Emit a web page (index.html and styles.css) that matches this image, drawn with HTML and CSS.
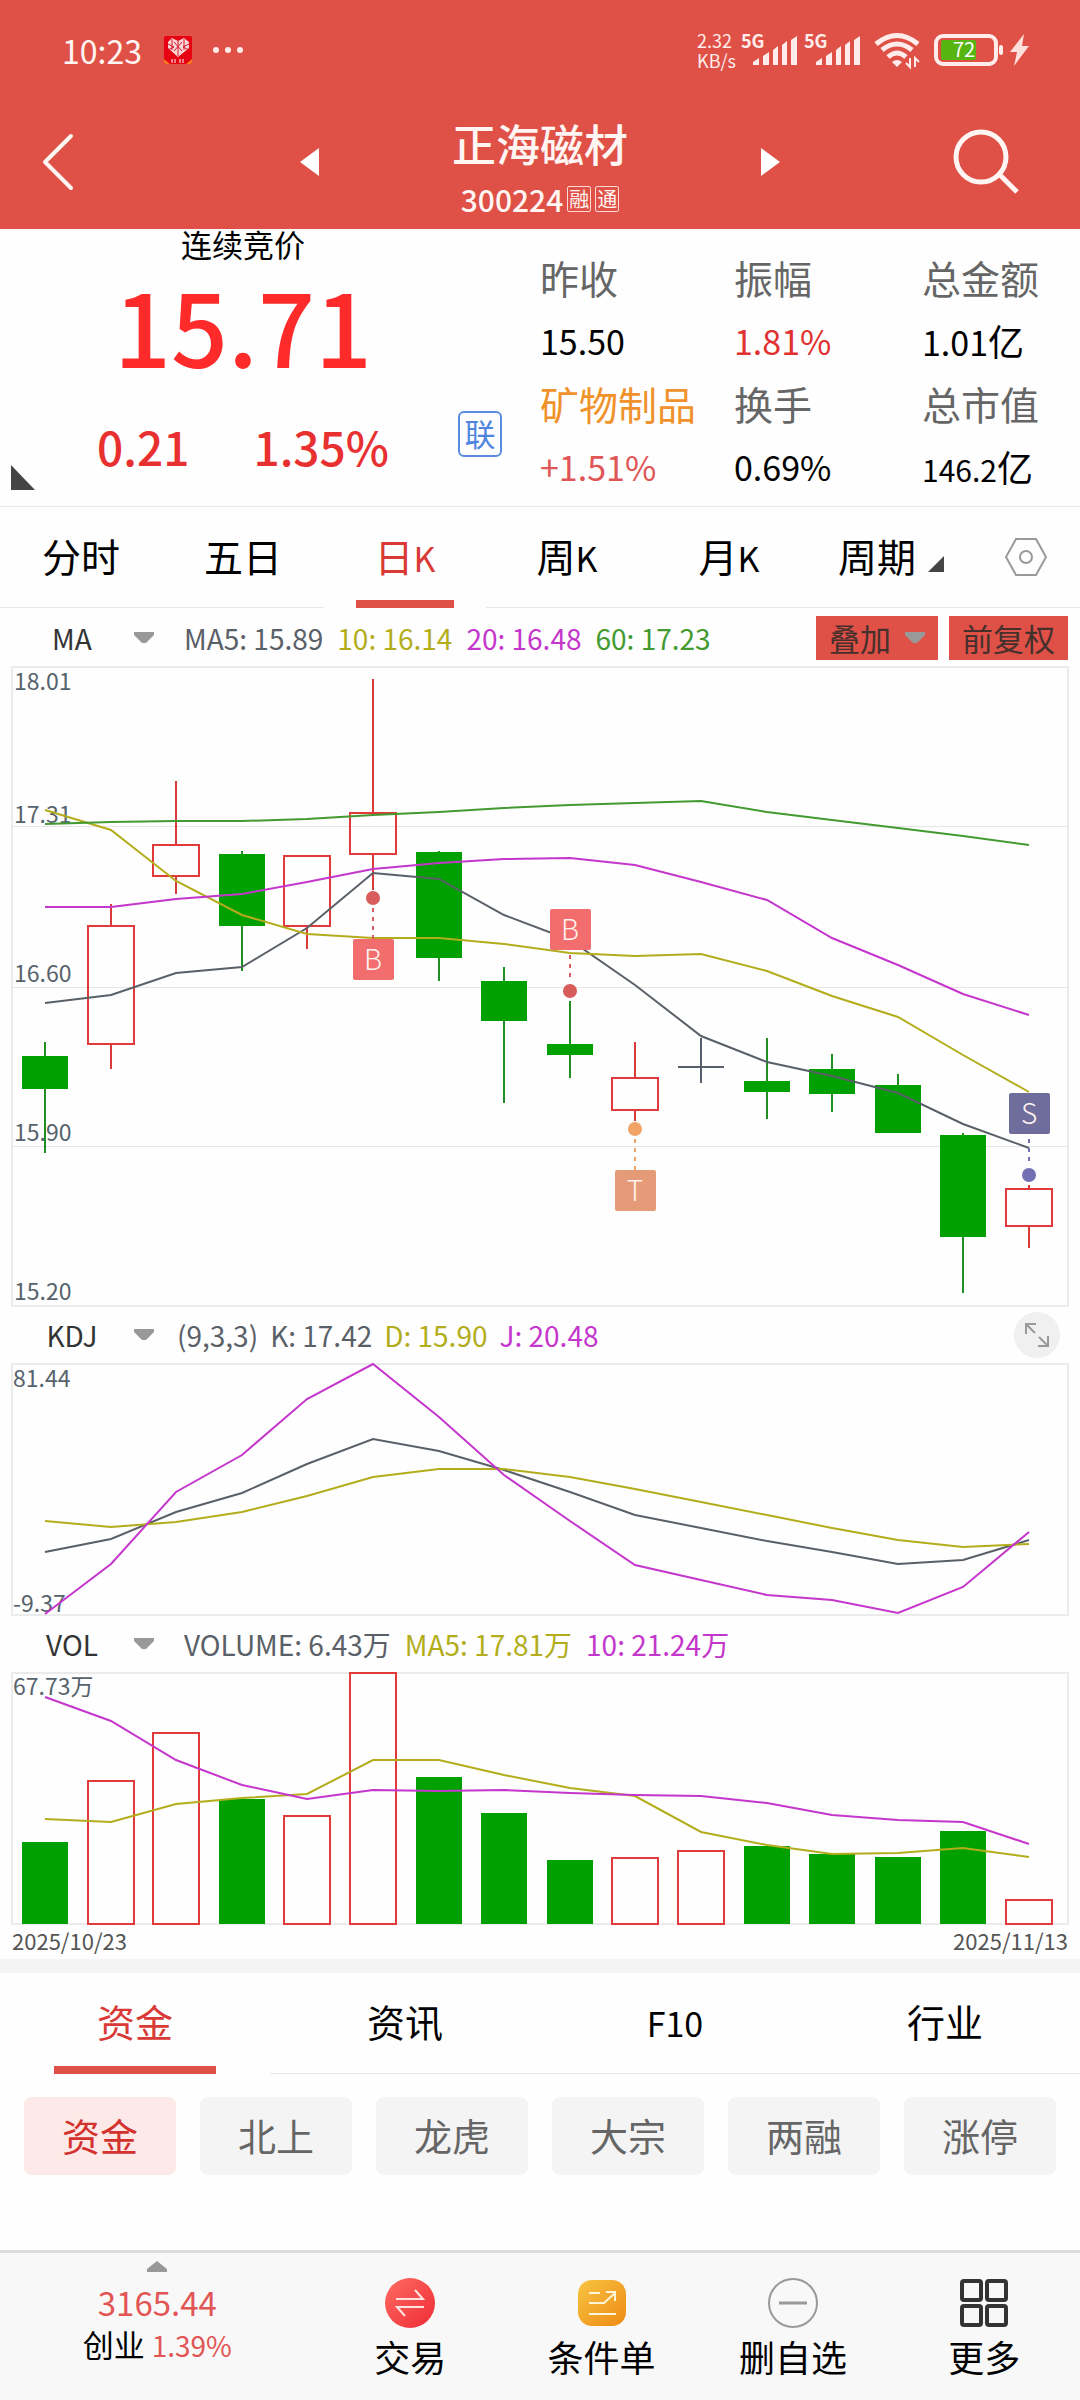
FILE: index.html
```
<!DOCTYPE html>
<html lang="zh-CN">
<head>
  <meta charset="UTF-8">
  <meta name="viewport" content="width=device-width, initial-scale=1.0">
  <title>正海磁材 300224</title>
  <link rel="stylesheet" href="styles.css">
</head>
<body>
  <header class="header">
    <div class="status">
      <span class="clock">10:23</span>
      <svg class="app-icon" width="28" height="28" viewBox="0 0 28 28">
        <rect width="28" height="28" rx="2" fill="#e60012"/>
        <path d="M0 23l6 5H2q-2 0-2-2zM28 23l-6 5h4q2 0 2-2z" fill="#f47b20"/>
        <path d="M14 21L4 12V6l4-4 6 3 6-3 5 4v6z" fill="#fbd5d5"/>
        <path d="M8 3v11M14 5v15M20 3v11M4 8l6 3-6 3M25 8l-6 3 6 3M10 6l8 9M18 6l-8 9" stroke="#d3192c" stroke-width="1" fill="none"/>
        <path d="M8 23v4M11 23v4M16 23v4M19 23v4" stroke="#fff" stroke-width="1"/>
      </svg>
      <svg class="dots" width="32" height="8" viewBox="0 0 32 8" fill="#ffeceb">
        <circle cx="4" cy="4" r="3"/><circle cx="16" cy="4" r="3"/><circle cx="28" cy="4" r="3"/>
      </svg>
      <span class="speed">2.32<br>KB/s</span>
      <svg class="signal" width="58" height="32" viewBox="0 0 58 32" fill="#ffeceb">
        <text x="0" y="14" class="net">5G</text>
        <path d="M12 31v-3l6-4v7zM22 31V22l6-4v13zM32 31V16l5-4v19zM41 31V11l5-4v24zM50 31V6l6-4v29z"/>
      </svg>
      <svg class="signal" width="58" height="32" viewBox="0 0 58 32" fill="#ffeceb">
        <text x="0" y="14" class="net">5G</text>
        <path d="M12 31v-3l6-4v7zM22 31V22l6-4v13zM32 31V16l5-4v19zM41 31V11l5-4v24zM50 31V6l6-4v29z"/>
      </svg>
      <svg class="wifi" width="46" height="36" viewBox="0 0 46 36" fill="none" stroke="#ffeceb" stroke-width="5">
        <path d="M2 12Q23-5 44 12M8 18Q23 6 38 18M14 25q9-8 18 0"/>
        <path d="M23 35l-5-5q5-4 10 0z" fill="#ffeceb" stroke="none"/>
        <path d="M36 26v9l-4-4M41 35v-9l4 4" stroke-width="2"/>
      </svg>
      <svg class="battery" width="70" height="32" viewBox="0 0 70 32">
        <rect x="2" y="2" width="60" height="28" rx="7" fill="none" stroke="#ffeceb" stroke-width="4"/>
        <rect x="7" y="6" width="35" height="20" rx="2" fill="#57b512"/>
        <rect x="65" y="11" width="4" height="10" rx="2" fill="#ffeceb"/>
        <text x="19" y="23" class="charge">72</text>
      </svg>
      <svg class="bolt" width="20" height="32" viewBox="0 0 20 32" fill="#ffe0dc"><path d="M14 0L0 18h7L4 32l15-20h-7z"/></svg>
    </div>
    <nav class="nav">
      <button class="back" aria-label="返回">
        <svg width="32" height="58" viewBox="0 0 32 58" fill="none" stroke="#fff5f3" stroke-width="4" stroke-linecap="round" stroke-linejoin="round"><path d="M28 3L2 29l26 26"/></svg>
      </button>
      <div class="switcher">
        <button aria-label="上一只"><svg width="19" height="28" viewBox="0 0 19 28" fill="#fff"><path d="M19 0v28L0 14z"/></svg></button>
        <div class="stock">
          <h1>正海磁材</h1>
          <p class="code">300224 <span class="mark">融</span><span class="mark">通</span></p>
        </div>
        <button aria-label="下一只"><svg width="19" height="28" viewBox="0 0 19 28" fill="#fff"><path d="M0 0v28l19-14z"/></svg></button>
      </div>
      <button class="search" aria-label="搜索">
        <svg width="66" height="66" viewBox="0 0 66 66" fill="none" stroke="#fff5f3" stroke-width="5"><circle cx="27" cy="28" r="25"/><path d="M45 45l18 18"/></svg>
      </button>
    </nav>
  </header>

  <main>
    <section class="quote">
      <div class="quote-left">
        <div class="price">
          <p class="phase">连续竞价</p>
          <p class="last">15.71</p>
          <p class="change"><span>0.21</span><span>1.35%</span></p>
        </div>
        <span class="link-mark">联</span>
        <svg class="corner" width="24" height="25" viewBox="0 0 24 25" fill="#444"><path d="M0 0l24 25H0z"/></svg>
      </div>
      <dl class="facts">
        <div><dt>昨收</dt><dd>15.50</dd></div>
        <div><dt>振幅</dt><dd class="up">1.81%</dd></div>
        <div><dt>总金额</dt><dd>1.01<span class="unit">亿</span></dd></div>
        <div><dt class="sector">矿物制品</dt><dd class="soft-up">+1.51%</dd></div>
        <div><dt>换手</dt><dd>0.69%</dd></div>
        <div><dt>总市值</dt><dd class="small">146.2<span class="unit">亿</span></dd></div>
      </dl>
    </section>

    <div class="periods">
      <button>分时</button>
      <button>五日</button>
      <button class="active">日<span class="k">K</span></button>
      <button>周<span class="k">K</span></button>
      <button>月<span class="k">K</span></button>
      <button class="more">周期<svg width="16" height="16" viewBox="0 0 16 16" fill="#444"><path d="M16 0v16H0z"/></svg></button>
      <button class="setting" aria-label="设置">
        <svg width="42" height="38" viewBox="0 0 42 38" fill="none" stroke="#999" stroke-width="2"><path d="M11 1h20l10 18-10 18H11L1 19z"/><circle cx="21" cy="19" r="6"/></svg>
      </button>
    </div>

    <section class="panel">
      <div class="bar first">
        <label class="pick"><select aria-label="主图指标"><option>MA</option></select><svg width="20" height="12" viewBox="0 0 20 12"><path d="M0 0h20v3l-8 8H8L0 3z"/></svg></label>
        <p class="values"><span class="gray">MA5: 15.89</span><span class="olive">10: 16.14</span><span class="purple">20: 16.48</span><span class="green">60: 17.23</span></p>
        <button class="tool">叠加<svg width="20" height="12" viewBox="0 0 20 12"><path d="M0 0h20v3l-8 8H8L0 3z"/></svg></button>
        <button class="tool">前复权</button>
      </div>
      <svg class="chart" id="kline" viewBox="0 0 1056 639"></svg>

      <div class="bar">
        <label class="pick"><select aria-label="副图指标"><option>KDJ</option></select><svg width="20" height="12" viewBox="0 0 20 12"><path d="M0 0h20v3l-8 8H8L0 3z"/></svg></label>
        <p class="values kdj"><span class="gray">(9,3,3)</span><span class="gray">K: 17.42</span><span class="olive">D: 15.90</span><span class="purple">J: 20.48</span></p>
        <button class="expand" aria-label="全屏">
          <svg width="24" height="24" viewBox="0 0 24 24" fill="none" stroke="#999" stroke-width="2"><path d="M1 11V1h10M1 1l9 9M23 13v10H13M23 23l-9-9"/></svg>
        </button>
      </div>
      <svg class="chart" id="kdj" viewBox="0 0 1056 251"></svg>

      <div class="bar">
        <label class="pick"><select aria-label="成交量指标"><option>VOL</option></select><svg width="20" height="12" viewBox="0 0 20 12"><path d="M0 0h20v3l-8 8H8L0 3z"/></svg></label>
        <p class="values"><span class="gray">VOLUME: 6.43万</span><span class="olive">MA5: 17.81万</span><span class="purple">10: 21.24万</span></p>
      </div>
      <svg class="chart" id="vol" viewBox="0 0 1056 251"></svg>
      <p class="dates"><span>2025/10/23</span><span>2025/11/13</span></p>
    </section>

    <section class="info">
      <div class="tabs">
        <button class="active">资金</button>
        <button>资讯</button>
        <button><span class="k">F10</span></button>
        <button>行业</button>
      </div>
      <div class="chips">
        <button class="active">资金</button>
        <button>北上</button>
        <button>龙虎</button>
        <button>大宗</button>
        <button>两融</button>
        <button>涨停</button>
      </div>
    </section>
  </main>

  <footer class="footer">
    <a class="index" href="#">
      <svg width="20" height="11" viewBox="0 0 20 11" fill="#999"><path d="M10 0l10 8v3H0V8z"/></svg>
      <span class="points">3165.44</span>
      <span class="board">创业 <span class="pct">1.39%</span></span>
    </a>
    <button>
      <svg width="50" height="50" viewBox="0 0 50 50">
        <defs><linearGradient id="red" x1="0" y1="0" x2="1" y2="1"><stop offset="0" stop-color="#ff6b63"/><stop offset="1" stop-color="#ee2c35"/></linearGradient></defs>
        <circle cx="25" cy="25" r="25" fill="url(#red)"/>
        <path d="M11 21h27l-8-9M39 29H12l8 9" fill="none" stroke="#ffe3e0" stroke-width="2"/>
      </svg>
      交易
    </button>
    <button>
      <svg width="50" height="50" viewBox="0 0 50 50">
        <defs><linearGradient id="gold" x1="0" y1="0" x2="1" y2="1"><stop offset="0" stop-color="#f7c443"/><stop offset="1" stop-color="#ee8a13"/></linearGradient></defs>
        <rect x="1" y="2" width="48" height="46" rx="14" fill="url(#gold)"/>
        <path d="M12 15h11M12 25h15l11-10M29 14h9v9M12 36h27" fill="none" stroke="#fff6d8" stroke-width="2"/>
      </svg>
      条件单
    </button>
    <button>
      <svg width="50" height="50" viewBox="0 0 50 50" fill="none" stroke="#999" stroke-width="2"><circle cx="25" cy="25" r="24"/><path d="M11 25h28" stroke-width="3"/></svg>
      删自选
    </button>
    <button>
      <svg width="50" height="50" viewBox="0 0 50 50" fill="none" stroke="#333" stroke-width="4"><rect x="3" y="3" width="19" height="19" rx="2"/><rect x="28" y="3" width="19" height="19" rx="2"/><rect x="3" y="28" width="19" height="19" rx="2"/><rect x="28" y="28" width="19" height="19" rx="2"/></svg>
      更多
    </button>
  </footer>
  <script src="charts.js"></script>
</body>
</html>
```

FILE: styles.css
```
* {
  box-sizing: border-box;
}
body, h1, p, dl, dd {
  margin: 0;
}
body {
  display: flex;
  flex-direction: column;
  min-height: 100vh;
  background: #fefefe;
  color: #000;
  font-family: "Noto Sans CJK SC", sans-serif;
}
button, select {
  margin: 0;
  padding: 0;
  border: 0;
  background: none;
  color: inherit;
  font-family: inherit;
}
svg {
  display: block;
  flex: none;
  overflow: visible;
}
main {
  flex: 1;
}

/* header */
.header {
  background: #df5147;
  color: #fff5f3;
}
.status {
  display: flex;
  align-items: center;
  height: 100px;
  padding: 0 50px 0 62px;
}
.clock {
  font-size: 32px;
}
.app-icon {
  margin-left: 22px;
}
.dots {
  margin-left: 20px;
}
.speed {
  margin-left: auto;
  font-size: 18px;
  line-height: 20px;
  color: #ffeceb;
}
.signal {
  margin-left: 5px;
}
.net {
  font-size: 18px;
  font-weight: bold;
}
.wifi {
  margin-left: 12px;
}
.battery {
  margin-left: 14px;
}
.charge {
  font-size: 20px;
  fill: #fff;
}
.bolt {
  margin-left: 6px;
}
.nav {
  display: flex;
  align-items: center;
  height: 129px;
  padding-bottom: 6px;
}
.back, .search {
  flex: 1;
  display: flex;
  padding: 0 60px 0 43px;
}
.search {
  justify-content: flex-end;
}
.switcher {
  flex: 0 0 480px;
  display: flex;
  align-items: center;
  justify-content: space-between;
}
.stock {
  padding-top: 16px;
  text-align: center;
}
.stock h1 {
  font-size: 44px;
  font-weight: 500;
  line-height: 58px;
}
.code {
  display: flex;
  align-items: center;
  justify-content: center;
  gap: 4px;
  font-size: 30px;
  font-weight: 500;
  line-height: 54px;
}
.mark {
  width: 24px;
  height: 26px;
  border: 1px solid #ffd9d5;
  border-radius: 2px;
  font-size: 20px;
  font-weight: 400;
  line-height: 23px;
}

/* quote */
.quote {
  display: flex;
  border-bottom: 1px solid #e8e8e8;
}
.quote-left {
  position: relative;
  width: 50%;
  display: flex;
  align-items: flex-end;
  padding: 0 38px 0 28px;
}
.price {
  flex: 1;
  align-self: flex-start;
  text-align: center;
}
.phase {
  font-size: 31px;
  line-height: 30px;
}
.last {
  font-size: 100px;
  font-weight: 500;
  line-height: 132px;
  color: #ff2a2a;
}
.change {
  display: flex;
  justify-content: center;
  gap: 64px;
  margin-top: 27px;
  font-size: 46px;
  font-weight: 500;
  line-height: 56px;
  color: #e93030;
}
.link-mark {
  width: 44px;
  height: 46px;
  margin-bottom: 49px;
  border: 2px solid #5a8be0;
  border-radius: 6px;
  color: #4f84e0;
  font-size: 31px;
  line-height: 39px;
  text-align: center;
}
.corner {
  position: absolute;
  left: 11px;
  bottom: 16px;
}
.facts {
  width: 50%;
  display: grid;
  grid-template-columns: 194fr 188fr 158fr;
  padding: 17px 0 8px;
  line-height: 63px;
}
.facts dt {
  height: 63px;
  color: #666;
  font-size: 39px;
  white-space: nowrap;
}
.facts dd {
  height: 63px;
  font-size: 34px;
  white-space: nowrap;
}
.facts .sector {
  color: #f0922b;
}
.facts .up {
  color: #e03131;
}
.facts .soft-up {
  color: #e05555;
}
.facts .small {
  font-size: 30px;
}
.unit {
  font-size: 36px;
}

/* period tabs */
.periods {
  display: flex;
  height: 101px;
}
.periods button {
  position: relative;
  flex: 162;
  padding-bottom: 4px;
  border-bottom: 1px solid #e8e8e8;
  font-size: 39px;
}
.periods .more {
  display: flex;
  align-items: center;
  justify-content: center;
  gap: 12px;
}
.more svg {
  margin-top: 18px;
}
.periods .setting {
  display: flex;
  flex: 108;
  align-items: center;
  justify-content: center;
  padding-bottom: 0;
}
.k {
  font-size: 34px;
}
.periods .active, .tabs .active {
  border-color: transparent;
  color: #d93a36;
}
.active::after {
  content: "";
  position: absolute;
  left: 20%;
  right: 20%;
  bottom: -1px;
  height: 8px;
  background: #df5147;
}

/* charts */
.panel {
  padding: 0 12px;
}
.bar {
  display: flex;
  align-items: center;
  height: 58px;
}
.first {
  height: 59px;
}
.pick {
  position: relative;
  display: flex;
  align-items: center;
  width: 142px;
}
.pick select {
  width: 142px;
  padding-right: 22px;
  appearance: none;
  color: #333;
  font-size: 28px;
  line-height: 40px;
  text-align: center;
  text-align-last: center;
}
.pick svg {
  position: absolute;
  right: 0;
  pointer-events: none;
}
.pick svg, .tool svg {
  fill: #999;
}
.values {
  flex: 1;
  display: flex;
  gap: 14px;
  padding-left: 30px;
  font-size: 28px;
  white-space: nowrap;
}
.kdj {
  gap: 12px;
  padding-left: 23px;
}
.gray { color: #5a6068; }
.olive { color: #b3ad1c; }
.purple { color: #c436cc; }
.green { color: #429a30; }
.tool {
  display: flex;
  align-items: center;
  gap: 14px;
  height: 44px;
  margin-left: 11px;
  padding: 0 13px;
  background: #df5147;
  color: #45302c;
  font-size: 31px;
}
.expand {
  display: flex;
  align-items: center;
  justify-content: center;
  width: 46px;
  height: 46px;
  margin-right: 8px;
  border-radius: 50%;
  background: #f0f0f0;
}
.chart {
  width: 100%;
}
.frame {
  fill: none;
  stroke: #ebebeb;
  stroke-width: 2;
}
.grid {
  stroke: #e6e6e6;
  shape-rendering: crispEdges;
}
.axis {
  fill: #56626c;
  font-size: 23px;
}
.rise {
  fill: none;
  stroke: #e03a3a;
  stroke-width: 2;
}
.fall {
  fill: #00a000;
}
.wick-rise { stroke: #d93a3a; stroke-width: 2; }
.wick-fall { stroke: #1f8f24; stroke-width: 2; }
.wick-flat { stroke: #56606c; stroke-width: 2; }
.line {
  fill: none;
  stroke: currentColor;
  stroke-width: 2;
}
.stem {
  stroke: currentColor;
  stroke-width: 2;
  stroke-dasharray: 4 5;
}
.letter {
  fill: #fff3ee;
  font-size: 28px;
  font-weight: 300;
  text-anchor: middle;
}
.dates {
  display: flex;
  justify-content: space-between;
  padding-bottom: 2px;
  color: #555;
  font-size: 22px;
  line-height: 33px;
}

/* info */
.info {
  border-top: 14px solid #f4f4f4;
}
.tabs {
  display: flex;
  height: 101px;
}
.tabs button {
  position: relative;
  flex: 1;
  padding-bottom: 6px;
  border-bottom: 1px solid #e6e6e6;
  font-size: 38px;
}
.chips {
  display: flex;
  gap: 24px;
  padding: 23px 24px;
}
.chips button {
  flex: 1;
  height: 78px;
  padding-bottom: 4px;
  border-radius: 8px;
  background: #f4f4f4;
  color: #666;
  font-size: 38px;
}
.chips .active {
  background: #fee9e9;
  color: #d3322e;
}
.chips .active::after {
  content: none;
}

/* footer */
.footer {
  display: flex;
  height: 150px;
  border-top: 3px solid #dcdcdc;
  background: #f8f8f8;
}
.footer button {
  flex: 191;
  display: flex;
  flex-direction: column;
  align-items: center;
  padding-top: 25px;
  font-size: 36px;
  line-height: 56px;
}
.index {
  flex: 314;
  display: flex;
  flex-direction: column;
  align-items: center;
  padding-top: 8px;
  color: #000;
  text-decoration: none;
}
.points {
  margin-top: 8px;
  color: #e25555;
  font-size: 33px;
  line-height: 44px;
}
.board {
  font-size: 31px;
  line-height: 40px;
}
.pct {
  color: #e25555;
  font-size: 28px;
}
```

FILE: charts.js
```
const STEP = 65.6;
const cx = i => Math.round(33 + STEP * i);

function add(svg, tag, attrs, text) {
  const el = document.createElementNS('http://www.w3.org/2000/svg', tag);
  for (const key in attrs) el.setAttribute(key, attrs[key]);
  if (text) el.textContent = text;
  svg.appendChild(el);
}

function frame(svg, height) {
  add(svg, 'rect', { class: 'frame', x: 0, y: 0, width: 1056, height: height });
}

function line(svg, color, ys) {
  const points = ys.map((y, i) => cx(i) + ',' + y).join(' ');
  add(svg, 'polyline', { class: 'line ' + color, points: points });
}

function body(svg, i, rise, top, bottom) {
  add(svg, 'rect', { class: rise ? 'rise' : 'fall', x: cx(i) - 23, y: top, width: 46, height: bottom - top });
}

function axis(svg, x, y, text) {
  add(svg, 'text', { class: 'axis', x: x, y: y }, text);
}

// type, high, open/close top, open/close bottom, low
const candles = [
  ['fall', 375, 389, 422, 486], ['rise', 237, 259, 377, 402], ['rise', 114, 178, 209, 227],
  ['fall', 184, 187, 259, 304], ['rise', 188, 189, 259, 282], ['rise', 12, 146, 187, 223],
  ['fall', 184, 185, 291, 314], ['fall', 300, 314, 354, 436], ['fall', 334, 377, 388, 411],
  ['rise', 375, 411, 443, 454], ['flat', 371, 400, 400, 416], ['fall', 371, 414, 425, 452],
  ['fall', 387, 402, 427, 445], ['fall', 407, 418, 466, 466], ['fall', 466, 468, 570, 626],
  ['rise', 518, 522, 559, 581]
];

const kline = document.getElementById('kline');
frame(kline, 639);
[159, 320, 479].forEach(y => add(kline, 'line', { class: 'grid', x1: 0, x2: 1056, y1: y, y2: y }));
axis(kline, 2, 23, '18.01');
axis(kline, 2, 156, '17.31');
axis(kline, 2, 315, '16.60');
axis(kline, 2, 474, '15.90');
axis(kline, 2, 633, '15.20');

candles.forEach(([type, high, top, bottom, low], i) => {
  const x = cx(i);
  add(kline, 'line', { class: 'wick-' + type, x1: x, x2: x, y1: high, y2: top });
  add(kline, 'line', { class: 'wick-' + type, x1: x, x2: x, y1: bottom, y2: low });
  if (type === 'flat') {
    add(kline, 'line', { class: 'wick-flat', x1: x - 23, x2: x + 23, y1: top, y2: top });
  } else {
    body(kline, i, type === 'rise', top, bottom);
  }
});

line(kline, 'gray', [336, 328, 306, 300, 261, 206, 212, 248, 273, 318, 369, 395, 409, 426, 457, 481]);
line(kline, 'olive', [143, 163, 214, 248, 267, 271, 271, 277, 286, 289, 287, 304, 329, 350, 388, 425]);
line(kline, 'purple', [240, 240, 232, 227, 215, 202, 196, 192, 191, 198, 215, 233, 271, 298, 327, 348]);
line(kline, 'green', [157, 155, 154, 154, 152, 148, 145, 141, 138, 136, 134, 145, 153, 161, 169, 178]);

// trade marks: letter, candle, dot y, box top, dot colour, box colour
[
  ['B', 5, 231, 272, '#d95c5c', '#f26d6d'],
  ['B', 8, 324, 242, '#d95c5c', '#f26d6d'],
  ['T', 9, 462, 503, '#f0a468', '#e59b78'],
  ['S', 15, 508, 426, '#7470b4', '#6f6d9c']
].forEach(([letter, i, dot, box, dotColor, boxColor]) => {
  const x = cx(i);
  const above = box < dot;
  add(kline, 'line', { class: 'stem', x1: x, x2: x, y1: above ? box + 46 : dot + 10, y2: above ? dot - 9 : box, style: 'color:' + dotColor });
  add(kline, 'circle', { cx: x, cy: dot, r: 7, fill: dotColor });
  add(kline, 'rect', { x: x - 20, y: box, width: 41, height: 41, rx: 2, fill: boxColor });
  add(kline, 'text', { class: 'letter', x: x, y: box + 31 }, letter);
});

const kdj = document.getElementById('kdj');
frame(kdj, 251);
axis(kdj, 1, 23, '81.44');
axis(kdj, 1, 248, '-9.37');
line(kdj, 'gray', [188, 175, 148, 129, 100, 75, 87, 106, 128, 151, 164, 177, 188, 200, 196, 176]);
line(kdj, 'olive', [157, 163, 158, 148, 132, 113, 105, 105, 113, 125, 138, 151, 164, 176, 183, 180]);
line(kdj, 'purple', [250, 200, 128, 91, 35, 0, 53, 111, 157, 201, 216, 231, 236, 249, 223, 168]);

const vol = document.getElementById('vol');
frame(vol, 251);
axis(vol, 1, 22, '67.73万');
[169, 108, 60, 126, 143, 0, 104, 140, 187, 185, 178, 173, 181, 184, 158, 227].forEach((top, i) => {
  body(vol, i, [1, 2, 4, 5, 9, 10, 15].includes(i), top, 251);
});
line(vol, 'olive', [146, 149, 131, 125, 121, 87, 87, 102, 115, 123, 159, 172, 181, 180, 175, 184]);
line(vol, 'purple', [24, 48, 87, 112, 126, 117, 118, 117, 120, 122, 123, 130, 142, 147, 149, 171]);
```
